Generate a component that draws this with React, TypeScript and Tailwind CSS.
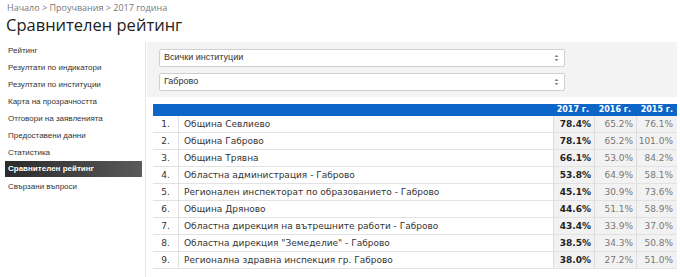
import React from "react";

const MENU = [
  "Рейтинг",
  "Резултати по индикатори",
  "Резултати по институции",
  "Карта на прозрачността",
  "Отговори на заявленията",
  "Предоставени данни",
  "Статистика",
  "Сравнителен рейтинг",
  "Свързани въпроси",
];

const ROWS = [
  { name: "Община Севлиево", y2017: "78.4%", y2016: "65.2%", y2015: "76.1%" },
  { name: "Община Габрово", y2017: "78.1%", y2016: "65.2%", y2015: "101.0%" },
  { name: "Община Трявна", y2017: "66.1%", y2016: "53.0%", y2015: "84.2%" },
  { name: "Областна администрация - Габрово", y2017: "53.8%", y2016: "64.9%", y2015: "58.1%" },
  { name: "Регионален инспекторат по образованието - Габрово", y2017: "45.1%", y2016: "30.9%", y2015: "73.6%" },
  { name: "Община Дряново", y2017: "44.6%", y2016: "51.1%", y2015: "58.9%" },
  { name: "Областна дирекция на вътрешните работи - Габрово", y2017: "43.4%", y2016: "33.9%", y2015: "37.0%" },
  { name: "Областна дирекция \"Земеделие\" - Габрово", y2017: "38.5%", y2016: "34.3%", y2015: "50.8%" },
  { name: "Регионална здравна инспекция гр. Габрово", y2017: "38.0%", y2016: "27.2%", y2015: "51.0%" },
];

const SelectBox = ({ value }: { value: string }) => (
  <div
    className="flex h-[18px] w-[406px] items-center justify-between rounded-[2px] border border-[#cfcfcf] bg-white pl-[4px] pr-[4px] text-[9px] text-[#333]"
    style={{ fontFamily: "'Liberation Sans', Arial, sans-serif" }}
  >
    <span>{value}</span>
    <svg width="5" height="8" viewBox="0 0 5 8" className="mr-[1px]">
      <path d="M0.5 3 L2.5 0.8 L4.5 3 Z" fill="#888" />
      <path d="M0.5 5 L2.5 7.2 L4.5 5 Z" fill="#888" />
    </svg>
  </div>
);

const App = () => {
  return (
    <div
      className="h-[277px] w-[680px] overflow-hidden bg-white"
      style={{ fontFamily: "'DejaVu Sans', sans-serif" }}
    >
      <div
        className="h-[13px] pl-[7px] pt-[2px] text-[9px] leading-[11px] text-[#777]"
        style={{ fontFamily: "'Open Sans', sans-serif" }}
      >
        Начало &gt; Проучвания &gt; 2017 година
      </div>
      <div
        className="h-[25px] pl-[6px] text-[16.5px] leading-[24px] text-[#222]"
        style={{ fontFamily: "'Open Sans', sans-serif" }}
      >
        Сравнителен рейтинг
      </div>

      <div className="mt-[4px] flex">
        <div
          className="h-[240px] w-[146px] shrink-0 border-r border-[#e6e6e6] pl-[5px] pr-[3px]"
          style={{ fontFamily: "'Liberation Sans', Arial, sans-serif" }}
        >
          {MENU.map((item, idx) =>
            idx === 7 ? (
              <div
                key={idx}
                className="mb-[1px] flex h-[16px] items-center bg-gradient-to-r from-[#2b2b2b] to-[#5a5a5a] pl-[3px] text-[8px] font-bold text-white"
              >
                {item}
              </div>
            ) : (
              <div key={idx} className="flex h-[17px] items-center pl-[3px] text-[8px] text-[#333]">
                {item}
              </div>
            )
          )}
        </div>

        <div className="flex-1">
          <div className="ml-[1px] mr-[3px] flex flex-col gap-[6px] bg-[#f3f3f3] pb-[6px] pl-[12px] pt-[7px]">
            <SelectBox value="Всички институции" />
            <SelectBox value="Габрово" />
          </div>

          <div className="ml-[7px] mr-[3px] mt-[7px]">
            <div className="grid h-[12px] grid-cols-[26px_374px_41px_42px_41px] bg-[#0b66c8] text-[8px] font-bold leading-[12px] text-white">
              <div />
              <div />
              <div className="pr-[5px] text-right">2017 г.</div>
              <div className="pr-[5px] text-right">2016 г.</div>
              <div className="pr-[4px] text-right">2015 г.</div>
            </div>
            {ROWS.map((row, idx) => (
              <div
                key={idx}
                className="grid h-[17px] grid-cols-[26px_374px_41px_42px_41px] border-b border-[#e2e2e2] text-[9px] leading-[16px]"
              >
                <div className="border-r border-[#e2e2e2] text-center text-[#333]">{idx + 1}.</div>
                <div className="pl-[5px] text-[#333]">{row.name}</div>
                <div className="border-l border-[#dcdcdc] bg-[#f2f2f2] pr-[3px] text-right font-bold text-[#222]">
                  {row.y2017}
                </div>
                <div className="border-l border-[#dcdcdc] bg-[#f2f2f2] pr-[3px] text-right text-[#777]">
                  {row.y2016}
                </div>
                <div className="border-l border-[#dcdcdc] bg-[#f2f2f2] pr-[4px] text-right text-[#777]">
                  {row.y2015}
                </div>
              </div>
            ))}
          </div>
        </div>
      </div>
    </div>
  );
};

export default App;
